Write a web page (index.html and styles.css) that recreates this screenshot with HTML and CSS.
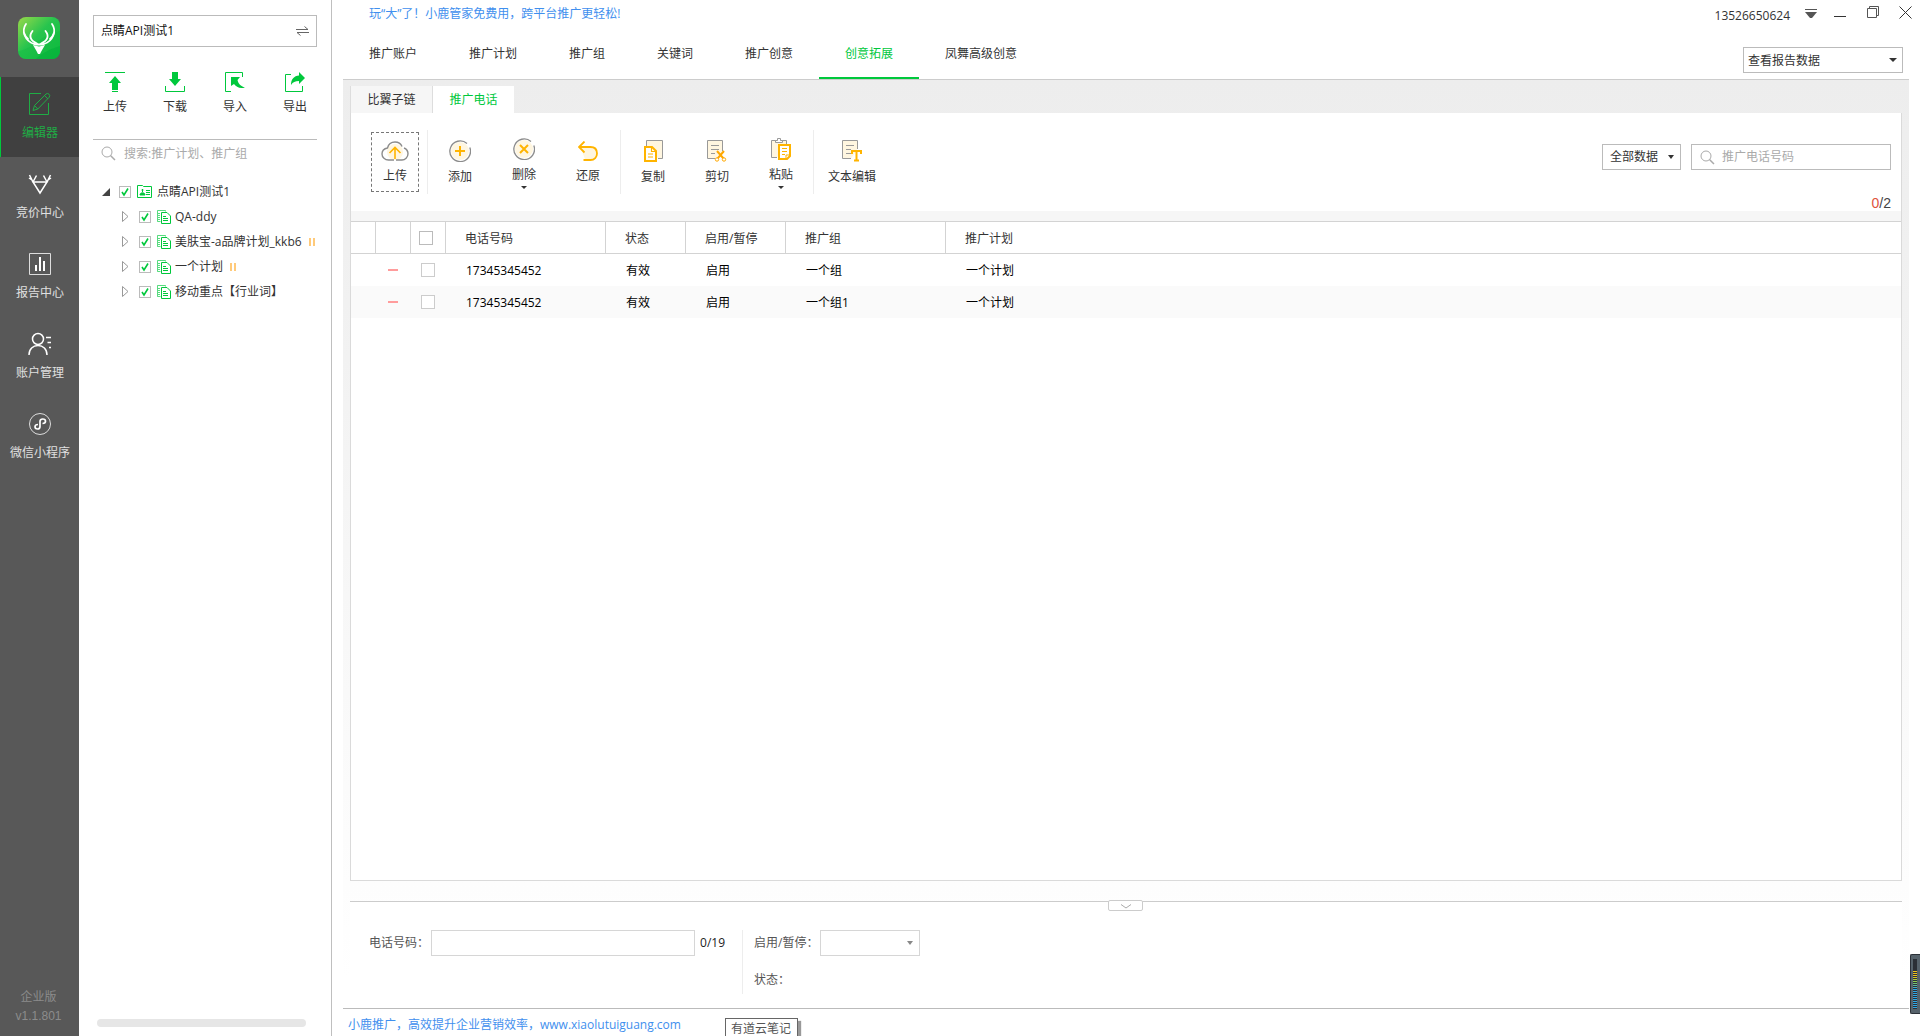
FILE: index.html
```html
<!DOCTYPE html>
<html lang="zh-CN">
<head>
<meta charset="utf-8">
<title>小鹿管家</title>
<link rel="stylesheet" href="styles.css">
</head>
<body>
<svg class="defs" aria-hidden="true">
  <symbol id="plan" viewBox="0 0 14 14"><path d="M3.500 11.500h-3V.5h8v1" fill="none" stroke="#00c83c" opacity=".65"/><path d="M1 3.500h2M1 5.500h2M1 7.500h2M1 9.500h2" stroke="#00c83c" opacity=".65"/><path d="M4.500 2.500h5.500l3.500 3.500v7.500h-9z" fill="#fff" stroke="#00c83c"/><path d="M6 6.500h3M6 8.500h5M6 10.500h5" stroke="#00c83c"/></symbol>
  <symbol id="lens" viewBox="0 0 15 15"><circle cx="6" cy="6" r="5" fill="none" stroke="currentColor"/><path d="M9.500 9.500L14 14" stroke="currentColor" stroke-width="1.500"/></symbol>
</svg>
<div class="app">
  <nav class="rail">
    <div class="logo">
      <svg width="42" height="42" viewBox="0 0 42 42"><defs><linearGradient id="lg" x1="0" y1="0" x2="1" y2="1"><stop offset="0" stop-color="#9ad94a"/><stop offset=".45" stop-color="#27c44e"/><stop offset="1" stop-color="#10bd3e"/></linearGradient></defs><rect width="42" height="42" rx="8" fill="url(#lg)"/><path d="M0 34C14 33 18 20 42 14v20a8 8 0 0 1-8 8H8a8 8 0 0 1-8-8z" fill="#08b33a" opacity=".25"/><path d="M18 42C24 36 32 32 42 29v5a8 8 0 0 1-8 8z" fill="#04b03a" opacity=".6"/><g fill="none" stroke="#fff" stroke-width="1.800" stroke-linecap="round"><path d="M8 7C3 14 7 24 16 27q5 1 10 0c9-3 13-13 8-20"/><path d="M6.500 17q1 3 3.500 5M35.500 17q-1 3-3.500 5M14.500 14c-4 5-2 10 4.500 12.500M27.500 14c4 5 2 10-4.500 12.500"/></g><path d="M15 28l6 1.500 6-1.500-3.500 6-1.500 3h-2l-1.500-3z" fill="#fff"/></svg>
    </div>
    <a class="rail-item active" href="#">
      <svg width="24" height="24" viewBox="0 0 24 24" fill="none" stroke="currentColor"><path d="M13 1.500H1.500v21h19V11"/><path d="M5 18.500l1.500-5L18 2q1.500-1.200 3 .2t.2 3L9.800 17zM16.500 3.500l3.500 3.500M6.500 13.500l3.300 3.500"/></svg>
      <span>编辑器</span></a>
    <a class="rail-item" href="#">
      <svg width="24" height="24" viewBox="0 0 24 24" fill="none" stroke="#fff" stroke-width="1.500"><path d="M5 10h14l-7 11z"/><path d="M5 10L1.500 3M1 6l3 2M5 10l3.500-6.500M19 10l3.500-7M23 6l-3 2M19 10l-3.500-6.500"/></svg>
      <span>竞价中心</span></a>
    <a class="rail-item" href="#">
      <svg width="24" height="24" viewBox="0 0 24 24" fill="none" stroke="#ddd"><path d="M1.500 1.500h21v21h-21z"/><path d="M8 13v6M12 5v14M16 9v10" stroke="#fff" stroke-width="2"/></svg>
      <span>报告中心</span></a>
    <a class="rail-item" href="#">
      <svg width="24" height="24" viewBox="0 0 24 24" fill="none" stroke="#fff" stroke-width="1.500"><circle cx="10" cy="7" r="5.500"/><path d="M1 23c0-6 4-9.500 9-9.500s9 3.500 9 9.500M18 5.500h5M19.500 10.500H23M21 15.500h2"/></svg>
      <span>账户管理</span></a>
    <a class="rail-item" href="#">
      <svg width="24" height="24" viewBox="0 0 24 24" fill="none" stroke="#ddd"><circle cx="12" cy="12" r="10.500"/><path d="M10 12.500c-2 0-3 1-3 2.300S8 17 9.500 17s2.500-1 2.500-2.500v-5C12 8 13 7 14.700 7S17.500 8 17.500 9.300s-1 2.200-3 2.200" stroke="#fff" stroke-width="1.700"/></svg>
      <span>微信小程序</span></a>
    <div class="edition"><span>企业版</span><span>v1.1.801</span></div>
  </nav>

  <aside class="side">
    <div class="account"><span>点睛API测试1</span>
      <button aria-label="切换账户"><svg width="13" height="10" viewBox="0 0 13 10"><path d="M0 3.500h12L8.500.5M13 6.500H1l3.500 3" fill="none" stroke="#666"/></svg></button></div>
    <div class="side-actions">
      <button><svg width="20" height="20" viewBox="0 0 20 20" fill="#00c83c"><path d="M0 0h20v1H0zM10 4l6 7h-3v7H7v-7H4zM7 19h6v1H7z"/></svg>上传</button>
      <button><svg width="20" height="20" viewBox="0 0 20 20" fill="#00c83c"><path d="M7 0h6v7h3l-6 7-6-7h3z"/><path d="M.5 14v5.500h19V14" fill="none" stroke="#00c83c"/></svg>下载</button>
      <button><svg width="20" height="20" viewBox="0 0 20 20" fill="#00c83c"><path d="M6 19.500H.5V.5h17V5" fill="none" stroke="#00c83c"/><path d="M6 5h9l-2.500 3c1 4 3 6 7.500 7.500-5 1.500-9-.5-11-3.500L6 14z"/></svg>导入</button>
      <button><svg width="20" height="20" viewBox="0 0 20 20" fill="#00c83c"><path d="M6 2.500H.5v17h17V14" fill="none" stroke="#00c83c"/><path d="M14 0l6 6-6 6V9c-4 0-6 1-8 4 0-6 3-9 8-9.500z"/></svg>导出</button>
    </div>
    <label class="side-search"><svg width="15" height="15"><use href="#lens"/></svg><input type="text" placeholder="搜索:推广计划、推广组" aria-label="搜索"></label>
    <ul class="tree">
      <li class="root"><svg width="8" height="8"><path d="M8 0v8H0z" fill="#444"/></svg><label><input type="checkbox" checked><svg width="15" height="13" viewBox="0 0 15 13" fill="none" stroke="#00c83c"><path d="M.5 .5h5l1 1h8v11H.5z"/><path d="M9 5.500h4M9 7.500h4M9 9.500h4"/><path d="M3 10c0-3 5-3 5 0zM5.500 4v3M4.500 5h2" fill="#00c83c"/></svg>点睛API测试1</label></li>
      <li><svg width="7" height="11"><path d="M.5 .5L6 5.500l-5.500 5z" fill="none" stroke="#999"/></svg><label><input type="checkbox" checked><svg width="14" height="14"><use href="#plan"/></svg>QA-ddy</label></li>
      <li><svg width="7" height="11"><path d="M.5 .5L6 5.500l-5.500 5z" fill="none" stroke="#999"/></svg><label><input type="checkbox" checked><svg width="14" height="14"><use href="#plan"/></svg>美肤宝-a品牌计划_kkb6</label><i class="paused"></i></li>
      <li><svg width="7" height="11"><path d="M.5 .5L6 5.500l-5.500 5z" fill="none" stroke="#999"/></svg><label><input type="checkbox" checked><svg width="14" height="14"><use href="#plan"/></svg>一个计划</label><i class="paused"></i></li>
      <li><svg width="7" height="11"><path d="M.5 .5L6 5.500l-5.500 5z" fill="none" stroke="#999"/></svg><label><input type="checkbox" checked><svg width="14" height="14"><use href="#plan"/></svg>移动重点【行业词】</label></li>
    </ul>
    <div class="side-scroll"></div>
  </aside>

  <main class="main">
    <header class="titlebar">
      <a href="#">玩“大”了！小鹿管家免费用，跨平台推广更轻松!</a>
      <div class="window">
        <span class="user">13526650624</span>
        <button aria-label="菜单"><svg width="12" height="12"><path d="M0 2.500h12" stroke="#555"/><path d="M0 5h12L7 11H5z" fill="#555"/></svg></button>
        <button aria-label="最小化"><svg width="12" height="12"><path d="M0 9.500h12" stroke="#333"/></svg></button>
        <button class="raised" aria-label="还原"><svg width="12" height="12" fill="none" stroke="#555"><path d="M.5 2.500h9v9h-9zM2.500 2V.5h9v9H10"/></svg></button>
        <button class="raised" aria-label="关闭"><svg width="13" height="13"><path d="M.5.5l12 12M12.500.5l-12 12" stroke="#333"/></svg></button>
      </div>
    </header>
    <div class="navbar">
      <nav class="tabs">
        <a href="#">推广账户</a><a href="#">推广计划</a><a href="#">推广组</a><a href="#">关键词</a><a href="#">推广创意</a><a href="#" class="active">创意拓展</a><a href="#">凤舞高级创意</a>
      </nav>
      <div class="select report"><select aria-label="报告数据"><option>查看报告数据</option></select></div>
    </div>

    <section class="work">
      <div class="subtabs"><button>比翼子链</button><button class="active">推广电话</button></div>
      <div class="panel">
        <div class="toolbar">
          <div class="group"><button class="upload"><svg width="28" height="20" viewBox="0 0 28 20"><circle cx="14" cy="11" r="8" fill="#fff6e0"/><path d="M13 19H7.500C4 19 1 16.500 1 13s2.500-5.500 5.500-6C7.500 3 10.500 1 14 1s6 2 7 4.500M23 7c2.500 1 4 3 4 5.800 0 3.500-3 6.200-6 6.200h-6" fill="none" stroke="#8c8c8c" stroke-width="1.400"/><path d="M14 18V7M8.500 12L14 6.500l5.500 5.500" fill="none" stroke="#ffb400" stroke-width="1.600"/></svg>上传</button></div>
          <div class="group">
            <button><svg width="22" height="22" viewBox="0 0 22 22"><circle cx="11" cy="11" r="9" fill="#fff6e0"/><path d="M18 3.500A10.300 10.300 0 1 0 20.800 7.500" fill="none" stroke="#8c8c8c" stroke-width="1.300"/><path d="M11 6v10M6 11h10" stroke="#ffb400" stroke-width="2"/></svg>添加</button>
            <button class="drop"><svg width="22" height="22" viewBox="0 0 22 22"><circle cx="11" cy="11" r="9" fill="#fff6e0"/><path d="M18 3.500A10.300 10.300 0 1 0 20.800 7.500" fill="none" stroke="#8c8c8c" stroke-width="1.300"/><path d="M7 7l8 8M15 7l-8 8" stroke="#ffb400" stroke-width="2"/></svg>删除</button>
            <button><svg width="20" height="20" viewBox="0 0 20 20"><path d="M5 6h8q6 0 6 6t-6 6H7L3 8z" fill="#fff6e0"/><path d="M6.500.5L1 6l5.500 5.500M1 6h11.500C17 6 19 9 19 12.500S16.500 19 12.500 19H5.500" fill="none" stroke="#ffb400" stroke-width="1.800"/></svg>还原</button>
          </div>
          <div class="group">
            <button><svg width="19" height="22" viewBox="0 0 19 22"><path d="M2.500 6V.5h16v18H14" fill="#fff6e0" stroke="#999"/><path d="M1 7h7l4 4v10H1z" fill="#fff" stroke="#ffb400" stroke-width="2"/><path d="M7.500 7v4.500H12M4 14h5M4 17h5" fill="none" stroke="#ffb400" stroke-width="1.200"/></svg>复制</button>
            <button><svg width="20" height="22" viewBox="0 0 20 22"><path d="M8 18.500H.5V.5h15V11" fill="#fff6e0" stroke="#999"/><path d="M4 5.500h8M4 9.500h8M4 13.500h4" stroke="#999"/><path d="M10 11l6.500 7.500M17 11l-6.500 7.500" stroke="#ffa800" stroke-width="2"/><circle cx="10" cy="19.500" r="1.700" fill="#fff" stroke="#ffa800"/><circle cx="17" cy="19.500" r="1.700" fill="#fff" stroke="#ffa800"/></svg>剪切</button>
            <button class="drop"><svg width="21" height="22" viewBox="0 0 21 22"><path d="M6 19.500H.5v-17h15V6" fill="#fff6e0" stroke="#999"/><path d="M4.500 4.500v-2h2V.5h3v2h2v2z" fill="#fff" stroke="#999"/><path d="M8 7h11v11l-3 3H8z" fill="#fff" stroke="#ffb400" stroke-width="2"/><path d="M11 10.500h5M11 13.500h5M11 16.500h3M15 21v-4h4" fill="none" stroke="#ffb400"/></svg>粘贴</button>
          </div>
          <div class="group last"><button><svg width="20" height="22" viewBox="0 0 20 22"><path d="M9 18.500H.5V.5h15V9" fill="#fff6e0" stroke="#999"/><path d="M4 5.500h8M4 9.500h5M4 13.500h5" stroke="#999"/><path d="M10 14v-3h9v3M14.500 11v9.500M12 20.500h5" fill="none" stroke="#ffb400" stroke-width="2"/></svg>文本编辑</button></div>
          <div class="filters">
            <div class="select scope"><select aria-label="数据范围"><option>全部数据</option></select></div>
            <label class="find"><svg width="15" height="15"><use href="#lens"/></svg><input type="text" placeholder="推广电话号码" aria-label="推广电话号码"></label>
          </div>
        </div>
        <p class="count"><b>0</b>/2</p>
        <div class="grid">
          <table>
            <colgroup><col class="w-mark"><col class="w-box"><col class="w-box"><col class="w-long"><col class="w-short"><col class="w-mid"><col class="w-long"><col></colgroup>
            <thead><tr><th></th><th></th><th class="tick"><input type="checkbox" aria-label="全选"></th><th>电话号码</th><th>状态</th><th>启用/暂停</th><th>推广组</th><th>推广计划</th></tr></thead>
            <tbody>
              <tr><td></td><td class="mark"><i></i></td><td class="tick"><input type="checkbox" aria-label="选择第1行"></td><td>17345345452</td><td>有效</td><td>启用</td><td>一个组</td><td>一个计划</td></tr>
              <tr><td></td><td class="mark"><i></i></td><td class="tick"><input type="checkbox" aria-label="选择第2行"></td><td>17345345452</td><td>有效</td><td>启用</td><td>一个组1</td><td>一个计划</td></tr>
            </tbody>
          </table>
        </div>
      </div>
      <div class="detail">
        <button class="fold" aria-label="收起"><svg width="10" height="5"><path d="M0 .5l5 3.500 5-3.500" fill="none" stroke="#aaa"/></svg></button>
        <div class="field phone"><label for="tel">电话号码：</label><input id="tel" type="text"><span>0/19</span></div>
        <div class="fields">
          <div class="field"><label for="sw">启用/暂停：</label><div class="select small"><select id="sw"><option></option></select></div></div>
          <div class="field">状态：</div>
        </div>
      </div>
    </section>
    <footer class="foot"><a href="#">小鹿推广，高效提升企业营销效率，www.xiaolutuiguang.com</a></footer>
  </main>
</div>
<div class="tip">有道云笔记</div>
<div class="meter"><i></i></div>
</body>
</html>
```
FILE: styles.css
```css
* { box-sizing: border-box; }
body {
  margin: 0;
  position: relative;
  height: 100vh;
  overflow: hidden;
  background: #fff;
  color: #333;
  font: 12px/16px "Open Sans", "Noto Sans CJK SC", sans-serif;
}
button, input, select { font: inherit; color: inherit; margin: 0; }
button { background: none; border: 0; padding: 0; }
input[type="text"] { border: 0; outline: 0; padding: 0; background: none; min-width: 0; }
input::placeholder { color: #aaa; opacity: 1; }
a { color: inherit; text-decoration: none; }
svg { display: block; flex: none; }
.defs { display: none; }
.app { display: flex; height: 100%; }

/* left rail */
.rail { width: 79px; flex: none; background: #585858; color: #e0e0e0; display: flex; flex-direction: column; }
.logo { height: 77px; padding: 17px 18px 0; }
.rail-item { height: 80px; display: flex; flex-direction: column; align-items: center; gap: 9px; padding: 15px 0 0 1px; white-space: nowrap; }
.rail-item.active { background: #404040; color: #1fad45; border-left: 1px solid #00c83c; padding-left: 0; }
.edition { margin-top: auto; padding: 0 2px 12px 0; display: flex; flex-direction: column; align-items: center; gap: 3px; color: #8c8c8c; font-family: "Liberation Sans", "Noto Sans CJK SC", sans-serif; }

/* account tree */
.side { width: 253px; flex: none; border-right: 1px solid #bfbfbf; padding: 15px 14px 9px; display: flex; flex-direction: column; }
.account { height: 32px; border: 1px solid #bbb; display: flex; align-items: center; justify-content: space-between; padding: 0 7px; color: #111; }
.side-actions { display: flex; justify-content: space-between; padding: 25px 10px 0; height: 92px; }
.side-actions button { display: flex; flex-direction: column; align-items: center; gap: 7px; height: 43px; }
.side-search { border-top: 1px solid #bbb; height: 37px; display: flex; align-items: center; gap: 8px; padding: 0 8px 9px; color: #aaa; }
.side-search input { flex: 1; }
.tree { list-style: none; margin: 3px 0 0; padding: 0; overflow: hidden; }
.tree li { height: 25px; display: flex; align-items: center; gap: 10px; padding-left: 29px; white-space: nowrap; }
.tree li.root { padding-left: 9px; gap: 9px; }
.tree label { display: flex; align-items: center; gap: 4px; }
.tree label input { margin-right: 2px; }
.tree .root label { gap: 5px; }
.tree .root input { margin-right: 1px; }
input[type="checkbox"] { appearance: none; width: 14px; height: 14px; border: 1px solid #bbb; background: #fff; display: block; }
.tree input[type="checkbox"] {
  width: 12px; height: 12px;
  background: #fff url("data:image/svg+xml,%3Csvg xmlns='http://www.w3.org/2000/svg' viewBox='0 0 10 10'%3E%3Cpath d='M2 5l2 3 4-6.500' fill='none' stroke='%2300c83c' stroke-width='1.600'/%3E%3C/svg%3E") center/10px no-repeat;
}
.paused { flex: none; width: 6px; height: 8px; margin-left: -3px; border: solid #ffca7a; border-width: 0 2px; }
.side-scroll { margin: auto 11px 0 4px; height: 8px; border-radius: 4px; background: #e6e6e6; }

/* title and navigation */
.main { flex: 1; min-width: 0; display: flex; flex-direction: column; padding: 0 11px; }
.titlebar { height: 27px; display: flex; justify-content: space-between; padding: 6px 0 0 26px; }
.titlebar a, .foot a { color: #3f8fee; }
.window { display: flex; align-items: flex-start; margin-right: -3px; gap: 20px; }
.user { margin: 2px -5px 0 0; }
.window button { margin: 1px -3px 0 0; }
.window button.raised { margin: 0; }
.window .raised:not(:last-child) { margin-left: 4px; }
.navbar { height: 53px; display: flex; justify-content: space-between; border-bottom: 1px solid #ccc; }
.tabs { display: flex; }
.tabs a { padding: 19px 26px 0; border-bottom: 2px solid transparent; }
.tabs .active { color: #00c83c; border-color: #00c83c; }

.select { position: relative; }
.select select { appearance: none; width: 100%; height: 26px; border: 1px solid #bbb; border-radius: 0; background: #fff; padding: 1px 4px 0; }
.select::after { content: ""; position: absolute; right: 6px; top: 11px; border: 4px solid transparent; border-top-color: #333; border-bottom: 0; pointer-events: none; }
.report { width: 160px; margin: 20px 6px 0 0; }
.scope { width: 79px; }
.scope select { padding: 0 0 0 7px; }
.scope::after { border-width: 4px 3px 0; right: 7px; }
.small { width: 100px; }
.small select { border-color: #d6d6d6; }
.small::after { border-width: 4px 3px 0; border-top-color: #888; right: 7px; }

/* work area */
.work { flex: 1; min-height: 0; display: flex; flex-direction: column; padding: 6px 7px 0; background: linear-gradient(#ededed, #f2f2f2 30%, #fff 97%); }
.subtabs { display: flex; }
.subtabs button { width: 83px; height: 27px; background: #f6f6f6; border: 1px solid #ddd; border-width: 0 1px; }
.subtabs .active { width: 81px; background: #fff; color: #00c83c; border: 0; }
.panel { flex: 1; min-height: 0; display: flex; flex-direction: column; background: #fff; border: solid #dadada; border-width: 0 1px 1px; }
.toolbar { display: flex; padding: 17px 10px 0; }
.group { display: flex; height: 64px; padding: 0; border-right: 1px solid #ededed; }
.group button { width: 64px; display: flex; flex-direction: column; align-items: center; justify-content: center; gap: 7px; padding-top: 1px; white-space: nowrap; }
.group:first-child { padding: 2px 7px 2px 10px; }
.group button.upload { width: 48px; margin-right: 1px; border: 1px dashed #777; }
.group button.drop { padding-top: 2px; }
.drop::after { content: ""; margin-top: -4px; border: 3px solid transparent; border-top-color: #333; border-bottom: 0; }
.group.last { border: 0; }
.group.last button { width: 76px; }
.filters { margin-left: auto; padding-top: 14px; display: flex; gap: 10px; }
.find { width: 200px; height: 26px; border: 1px solid #bbb; display: flex; align-items: center; gap: 7px; padding: 0 8px; color: #aaa; }
.count { margin: 1px 10px 0; text-align: right; font-size: 14px; font-family: "Liberation Sans", sans-serif; color: #444; }
.count b { font-weight: 400; color: #e0513c; }
.grid { flex: 1; min-height: 0; border-top: 10px solid #f6f6f6; }
table { width: 100%; table-layout: fixed; border-collapse: separate; border-spacing: 0; }
.w-mark { width: 25px; }
.w-box { width: 35px; }
.w-long { width: 160px; }
.w-short { width: 80px; }
.w-mid { width: 100px; }
th { height: 33px; padding: 2px 0 0 19px; text-align: left; font-weight: 400; border: 1px solid #d3d3d3; border-left: 0; }
th:last-child { border-right: 0; }
td { height: 32px; padding: 2px 0 0 20px; color: #000; }
tbody tr:nth-child(even) { background: #fafafa; }
th.tick { padding: 0 0 0 8px; }
td.tick { padding: 0 0 0 10px; }
td.tick input { border-color: #ccc; }
td.mark { padding: 0 0 0 12px; }
.mark i { display: block; width: 10px; height: 2px; background: #ff9c9c; }

/* detail form */
.detail { position: relative; height: 107px; margin-top: 20px; padding: 28px 20px 0 19px; border-top: 1px solid #ccc; display: flex; background: #fff; color: #555; }
.fold { position: absolute; left: 50%; top: -2px; margin-left: -18px; width: 35px; height: 11px; border: 1px solid #ccc; border-radius: 2px; background: #fff; display: flex; justify-content: center; padding-top: 3px; }
.field { display: flex; align-items: center; height: 26px; }
.phone { width: 373px; }
.phone input[type="text"] { width: 264px; height: 26px; border: 1px solid #d6d6d6; margin: 0 5px 0 2px; padding: 0 4px; background: #fff; }
.phone span { color: #222; }
.fields { height: 64px; border-left: 1px solid #ededed; padding-left: 11px; display: flex; flex-direction: column; gap: 11px; }
.fields label { width: 66px; white-space: nowrap; }
.foot { height: 28px; border-top: 1px solid #bbb; padding: 8px 5px 0; }

/* desktop overlays */
.tip { position: absolute; left: 725px; bottom: -4px; width: 73px; height: 22px; border: 1px solid #666; background: #fff; color: #555; padding: 1px 5px; line-height: 18px; box-shadow: 3px 3px 1px #999; white-space: nowrap; }
.meter { position: absolute; right: 0; bottom: 22px; width: 10px; height: 60px; border: solid #2c3138; border-width: 1px 0 1px 1px; border-radius: 2px 0 0 2px; background: #56626b; padding: 4px 2px; }
.meter i { display: block; width: 4px; height: 50px; background: repeating-linear-gradient(transparent 0 1px, #2b2f36 1px 2px), linear-gradient(#2b2f36 25%, #f0c419 25% 34%, #8ccf4d 45%, #2fa8e6 60%); }
```
